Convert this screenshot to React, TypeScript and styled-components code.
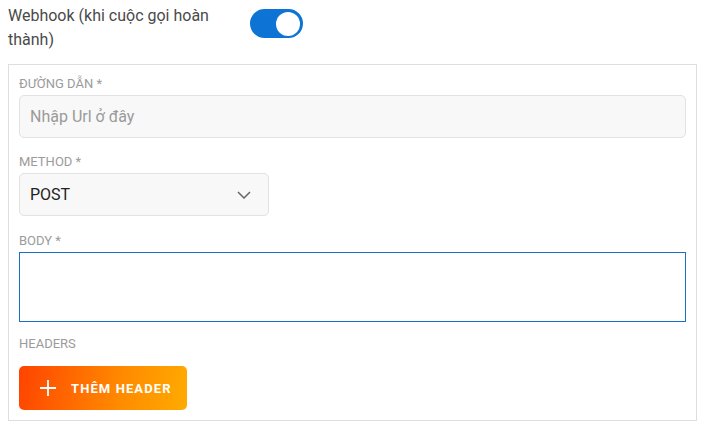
import React from "react";
import styled, { createGlobalStyle } from "styled-components";

const GlobalStyle = createGlobalStyle`
  html, body {
    margin: 0;
    padding: 0;
    background: #fff;
    font-family: Roboto, "Liberation Sans", sans-serif;
  }
  * {
    box-sizing: border-box;
  }
`;

const Page = styled.div`
  padding: 4px 8px 0 8px;
  width: 705px;
`;

const TitleRow = styled.div`
  display: flex;
  align-items: flex-start;
  margin-bottom: 12px;
`;

const Title = styled.div`
  width: 242px;
  font-size: 16px;
  line-height: 24px;
  color: #4a4a4a;
`;

const Switch = styled.div<{ $on: boolean }>`
  margin-top: 5px;
  width: 53px;
  height: 29px;
  border-radius: 15px;
  background: ${(p) => (p.$on ? "#0d74d6" : "#c4c4c4")};
  display: flex;
  align-items: center;
  justify-content: ${(p) => (p.$on ? "flex-end" : "flex-start")};
  padding: 0 3px;
`;

const Knob = styled.span`
  width: 24px;
  height: 24px;
  border-radius: 50%;
  background: #fff;
`;

const Panel = styled.div`
  width: 689px;
  border: 1px solid #dedede;
  padding: 11px 10px 10px 10px;
`;

const Label = styled.div<{ $gap?: number }>`
  font-size: 13px;
  line-height: 16px;
  color: #9b9b9b;
  text-transform: uppercase;
  margin-bottom: ${(p) => p.$gap ?? 3}px;
`;

const Field = styled.div<{ $space: number }>`
  margin-bottom: ${(p) => p.$space}px;
`;

const TextInput = styled.div`
  height: 43px;
  border: 1px solid #e2e2e2;
  border-radius: 5px;
  background: #f8f8f8;
  display: flex;
  align-items: center;
  padding: 0 10px;
  font-size: 16px;
  color: #9a9a9a;
`;

const Select = styled.div`
  width: 250px;
  height: 43px;
  border: 1px solid #e2e2e2;
  border-radius: 5px;
  background: #f8f8f8;
  display: flex;
  align-items: center;
  justify-content: space-between;
  padding: 0 17px 0 10px;
  font-size: 16px;
  color: #222;
`;

const BodyArea = styled.div`
  height: 70px;
  border: 1px solid #1a6fc9;
  background: #fff;
`;

const AddButton = styled.button`
  display: flex;
  align-items: center;
  gap: 14px;
  height: 44px;
  width: 168px;
  padding: 0 0 0 20px;
  border: none;
  border-radius: 5px;
  background: linear-gradient(100deg, #ff4300 0%, #ff8a00 60%, #ffab00 100%);
  color: #fff;
  font-family: Roboto, "Liberation Sans", sans-serif;
  font-weight: 700;
  font-size: 13px;
  letter-spacing: 1.1px;
  cursor: pointer;
`;

const Plus = () => (
  <svg width="18" height="18" viewBox="0 0 18 18">
    <path d="M9 1v16M1 9h16" stroke="#fff" strokeWidth="1.8" fill="none" />
  </svg>
);

const Chevron = () => (
  <svg width="14" height="8" viewBox="0 0 14 8">
    <path d="M1 1l6 6 6-6" stroke="#666" strokeWidth="1.5" fill="none" />
  </svg>
);

const App: React.FC = () => {
  return (
    <Page>
      <GlobalStyle />
      <TitleRow>
        <Title>Webhook (khi cuộc gọi hoàn thành)</Title>
        <Switch $on>
          <Knob />
        </Switch>
      </TitleRow>
      <Panel>
        <Field $space={16}>
          <Label>Đường dẫn *</Label>
          <TextInput>Nhập Url ở đây</TextInput>
        </Field>
        <Field $space={17}>
          <Label>Method *</Label>
          <Select>
            <span>POST</span>
            <Chevron />
          </Select>
        </Field>
        <Field $space={14}>
          <Label>Body *</Label>
          <BodyArea />
        </Field>
        <Field $space={0}>
          <Label $gap={14}>Headers</Label>
          <AddButton>
            <Plus />
            THÊM HEADER
          </AddButton>
        </Field>
      </Panel>
    </Page>
  );
};

export default App;
